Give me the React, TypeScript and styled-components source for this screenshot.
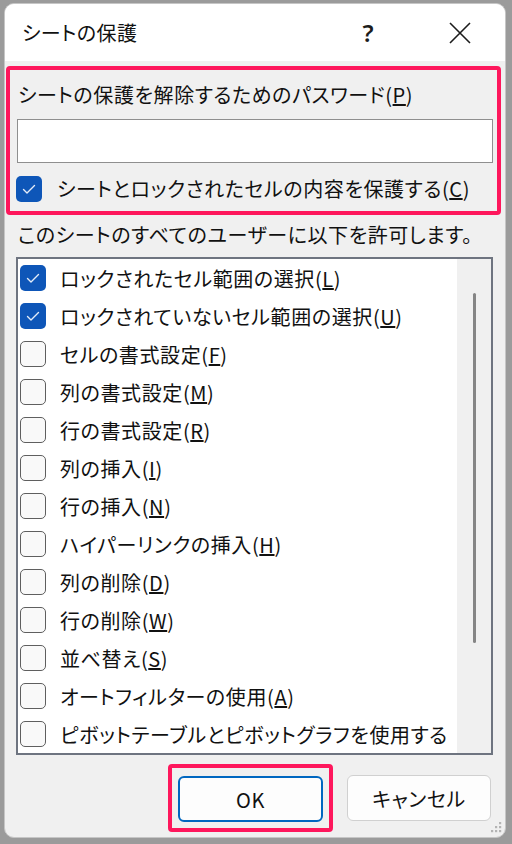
import React from 'react';
import styled, { createGlobalStyle } from 'styled-components';

const GlobalStyle = createGlobalStyle`
  html, body {
    margin: 0;
    padding: 0;
  }
  body {
    background: #9b9b9b;
    font-family: "Noto Sans CJK JP", "Noto Sans", sans-serif;
    font-feature-settings: "palt";
    color: #111;
  }
`;

type Perm = {
  label: string;
  key: string;
  checked?: boolean;
};

const perms: Perm[] = [
  { label: 'ロックされたセル範囲の選択', key: 'L', checked: true },
  { label: 'ロックされていないセル範囲の選択', key: 'U', checked: true },
  { label: 'セルの書式設定', key: 'F' },
  { label: '列の書式設定', key: 'M' },
  { label: '行の書式設定', key: 'R' },
  { label: '列の挿入', key: 'I' },
  { label: '行の挿入', key: 'N' },
  { label: 'ハイパーリンクの挿入', key: 'H' },
  { label: '列の削除', key: 'D' },
  { label: '行の削除', key: 'W' },
  { label: '並べ替え', key: 'S' },
  { label: 'オートフィルターの使用', key: 'A' },
  { label: 'ピボットテーブルとピボットグラフを使用する', key: '' },
];

function Check({ checked }: { checked?: boolean }) {
  return (
    <CheckBox $checked={checked}>
      {checked && (
        <svg width="26" height="26" viewBox="0 0 26 26">
          <path d="M7.5 13.5 L11 17 L18.5 9.5" fill="none" stroke="#e4ecf8" strokeWidth="1.4" strokeLinecap="round" strokeLinejoin="round" />
        </svg>
      )}
    </CheckBox>
  );
}

function Label({ text, k }: { text: string; k: string }) {
  return (
    <span>
      {text}
      {k && (
        <>
          (<u>{k}</u>)
        </>
      )}
    </span>
  );
}

export default function App() {
  return (
    <>
      <GlobalStyle />
      <Screen>
        <Dialog>
          <TitleBar>
            <Title>シートの保護</Title>
            <HelpButton>?</HelpButton>
            <CloseButton>
              <svg width="24" height="24" viewBox="0 0 24 24">
                <path d="M2 2 L22 22 M22 2 L2 22" stroke="#1c1c1c" strokeWidth="1.6" />
              </svg>
            </CloseButton>
          </TitleBar>

          <Body>
            <ProtectBox>
              <FieldLabel>
                <Label text="シートの保護を解除するためのパスワード" k="P" />
              </FieldLabel>
              <PasswordInput type="password" />
              <CheckRow>
                <Check checked />
                <Label text="シートとロックされたセルの内容を保護する" k="C" />
              </CheckRow>
            </ProtectBox>

            <AllowText>このシートのすべてのユーザーに以下を許可します。</AllowText>

            <PermList>
              <PermRows>
                {perms.map((p) => (
                  <PermRow key={p.label}>
                    <Check checked={p.checked} />
                    <Label text={p.label} k={p.key} />
                  </PermRow>
                ))}
              </PermRows>
              <ScrollTrack>
                <ScrollThumb />
              </ScrollTrack>
            </PermList>

            <ButtonBar>
              <Highlight>
                <DialogButton $primary>OK</DialogButton>
              </Highlight>
              <DialogButton>キャンセル</DialogButton>
            </ButtonBar>
          </Body>

          <Grip>
            <svg width="16" height="16" viewBox="0 0 16 16">
              <rect x="12" y="2" width="2.2" height="2.2" fill="#b4b4b4" />
              <rect x="8" y="6" width="2.2" height="2.2" fill="#b4b4b4" />
              <rect x="12" y="6" width="2.2" height="2.2" fill="#b4b4b4" />
              <rect x="4" y="10" width="2.2" height="2.2" fill="#b4b4b4" />
              <rect x="8" y="10" width="2.2" height="2.2" fill="#b4b4b4" />
              <rect x="12" y="10" width="2.2" height="2.2" fill="#b4b4b4" />
            </svg>
          </Grip>
        </Dialog>
      </Screen>
    </>
  );
}

const Screen = styled.div`
  width: 512px;
  height: 844px;
  box-sizing: border-box;
  padding: 3px 6px 6px 4px;
`;

const Dialog = styled.div`
  position: relative;
  height: 100%;
  box-sizing: border-box;
  border: 1px solid #c6c6c6;
  border-radius: 10px;
  background: #f0f0f0;
  overflow: hidden;
  display: flex;
  flex-direction: column;
`;

const TitleBar = styled.div`
  height: 57px;
  flex-shrink: 0;
  background: #ffffff;
  display: flex;
  align-items: center;
  padding: 0 25px 0 17px;
`;

const Title = styled.div`
  flex: 1;
  font-size: 20px;
  line-height: 28px;
  letter-spacing: 0.4px;
`;

const HelpButton = styled.div`
  width: 20px;
  text-align: center;
  font-size: 24px;
  font-weight: 600;
  line-height: 28px;
  color: #1c1c1c;
  font-family: "Noto Sans", sans-serif;
  margin-left: -4px;
`;

const CloseButton = styled.div`
  width: 40px;
  margin-left: 62px;
  display: flex;
  justify-content: center;
`;

const Body = styled.div`
  flex: 1;
  display: flex;
  flex-direction: column;
  padding: 0 12px;
  font-size: 20px;
  letter-spacing: 0.6px;
`;

const ProtectBox = styled.div`
  margin: 5px -8px 0 -11px;
  border: 4px solid #fe175c;
  border-radius: 4px;
  padding: 11px 4px 9px 7px;
  display: flex;
  flex-direction: column;
`;

const FieldLabel = styled.div`
  line-height: 28px;
  padding-left: 1px;
`;

const PasswordInput = styled.input`
  margin-top: 10px;
  height: 44px;
  box-sizing: border-box;
  border: 1.5px solid #8f8f8f;
  background: #ffffff;
  outline: none;
`;

const CheckRow = styled.div`
  margin-top: 13px;
  height: 26px;
  display: flex;
  align-items: center;
  gap: 15px;
  margin-left: -1px;
  line-height: 26px;
`;

const CheckBox = styled.span<{ $checked?: boolean }>`
  width: 26px;
  height: 26px;
  flex-shrink: 0;
  box-sizing: border-box;
  border-radius: 5px;
  background: ${(p) => (p.$checked ? '#0e56b8' : '#f9f9f9')};
  border: ${(p) => (p.$checked ? 'none' : '1.5px solid #5f5f5f')};
  display: flex;
  align-items: center;
  justify-content: center;
`;

const AllowText = styled.div`
  margin-top: 6px;
  line-height: 28px;
  padding-left: 1px;
  white-space: nowrap;
`;

const PermList = styled.div`
  margin: 8px 0 0 -1px;
  height: 498px;
  flex-shrink: 0;
  box-sizing: border-box;
  border: 2px solid #6e7480;
  background: #ffffff;
  display: flex;
  overflow: hidden;
`;

const PermRows = styled.div`
  flex: 1;
  min-width: 0;
  overflow: hidden;
  display: flex;
  flex-direction: column;
`;

const PermRow = styled.div`
  height: 38px;
  flex-shrink: 0;
  display: flex;
  align-items: center;
  gap: 14px;
  padding-left: 2px;
  white-space: nowrap;
`;

const ScrollTrack = styled.div`
  width: 34px;
  flex-shrink: 0;
  background: #f0f0f0;
  display: flex;
  justify-content: center;
  padding-top: 34px;
`;

const ScrollThumb = styled.div`
  width: 3px;
  height: 350px;
  border-radius: 2px;
  background: #858585;
`;

const ButtonBar = styled.div`
  margin-top: 9px;
  display: flex;
  justify-content: flex-end;
  align-items: center;
  gap: 14px;
  padding-right: 2px;
`;

const Highlight = styled.div`
  border: 4px solid #fe175c;
  border-radius: 4px;
  padding: 8px 6px 6px 6px;
  display: flex;
`;

const DialogButton = styled.button<{ $primary?: boolean }>`
  width: ${(p) => (p.$primary ? '145px' : '144px')};
  height: 46px;
  box-sizing: border-box;
  border-radius: 6px;
  background: #fdfdfd;
  border: ${(p) => (p.$primary ? '2px solid #0067c0' : '1px solid #d0d0d0')};
  font-family: "Noto Sans CJK JP", "Noto Sans", sans-serif;
  font-feature-settings: "palt";
  font-size: 20px;
  letter-spacing: 0.6px;
  color: #111;
  padding: 0;
`;

const Grip = styled.div`
  position: absolute;
  right: 2px;
  bottom: 1px;
  display: flex;
`;
